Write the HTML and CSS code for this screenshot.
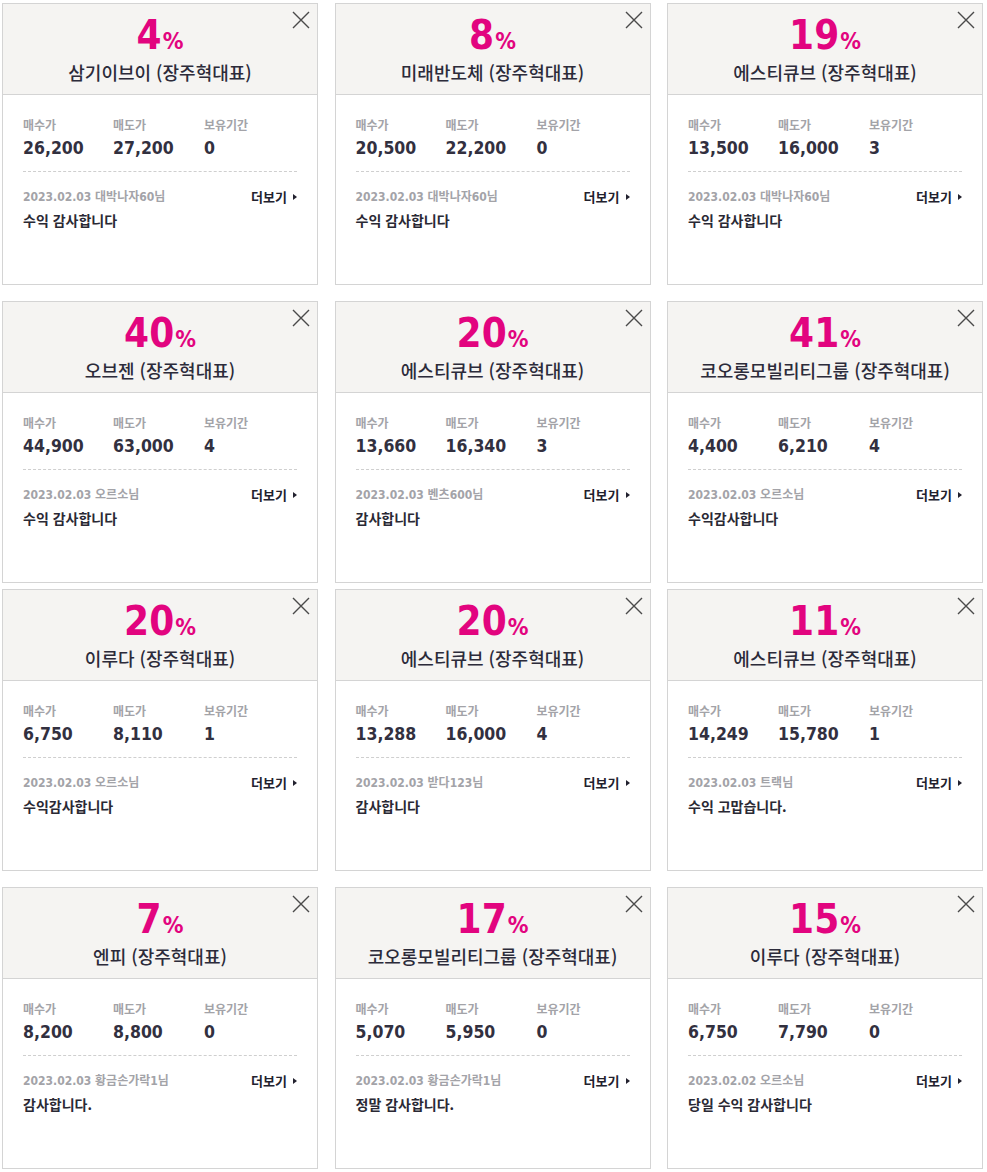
FILE: index.html
```html
<!DOCTYPE html>
<html lang="ko">
<head>
<meta charset="utf-8">
<title>수익 인증</title>
<link rel="stylesheet" href="styles.css">
</head>
<body>
<div class="board">
  <div class="row">
    <div class="card">
      <div class="card-head">
        <div class="rate">4<span class="pct">%</span></div>
        <div class="stock">삼기이브이 (장주혁대표)</div>
        <span class="close" aria-label="닫기"><svg viewBox="0 0 18 18"><path d="M1 1 L17 17 M17 1 L1 17"/></svg></span>
      </div>
      <div class="card-body">
        <div class="stats">
          <div class="stat"><div class="label">매수가</div><div class="value">26,200</div></div>
          <div class="stat"><div class="label">매도가</div><div class="value">27,200</div></div>
          <div class="stat"><div class="label">보유기간</div><div class="value">0</div></div>
        </div>
        <div class="meta"><span class="date">2023.02.03 대박나자60님</span><span class="more">더보기<i class="tri"></i></span></div>
        <div class="comment">수익 감사합니다</div>
      </div>
    </div>
    <div class="card">
      <div class="card-head">
        <div class="rate">8<span class="pct">%</span></div>
        <div class="stock">미래반도체 (장주혁대표)</div>
        <span class="close" aria-label="닫기"><svg viewBox="0 0 18 18"><path d="M1 1 L17 17 M17 1 L1 17"/></svg></span>
      </div>
      <div class="card-body">
        <div class="stats">
          <div class="stat"><div class="label">매수가</div><div class="value">20,500</div></div>
          <div class="stat"><div class="label">매도가</div><div class="value">22,200</div></div>
          <div class="stat"><div class="label">보유기간</div><div class="value">0</div></div>
        </div>
        <div class="meta"><span class="date">2023.02.03 대박나자60님</span><span class="more">더보기<i class="tri"></i></span></div>
        <div class="comment">수익 감사합니다</div>
      </div>
    </div>
    <div class="card">
      <div class="card-head">
        <div class="rate">19<span class="pct">%</span></div>
        <div class="stock">에스티큐브 (장주혁대표)</div>
        <span class="close" aria-label="닫기"><svg viewBox="0 0 18 18"><path d="M1 1 L17 17 M17 1 L1 17"/></svg></span>
      </div>
      <div class="card-body">
        <div class="stats">
          <div class="stat"><div class="label">매수가</div><div class="value">13,500</div></div>
          <div class="stat"><div class="label">매도가</div><div class="value">16,000</div></div>
          <div class="stat"><div class="label">보유기간</div><div class="value">3</div></div>
        </div>
        <div class="meta"><span class="date">2023.02.03 대박나자60님</span><span class="more">더보기<i class="tri"></i></span></div>
        <div class="comment">수익 감사합니다</div>
      </div>
    </div>
  </div>

  <div class="row tight">
    <div class="card">
      <div class="card-head">
        <div class="rate">40<span class="pct">%</span></div>
        <div class="stock">오브젠 (장주혁대표)</div>
        <span class="close" aria-label="닫기"><svg viewBox="0 0 18 18"><path d="M1 1 L17 17 M17 1 L1 17"/></svg></span>
      </div>
      <div class="card-body">
        <div class="stats">
          <div class="stat"><div class="label">매수가</div><div class="value">44,900</div></div>
          <div class="stat"><div class="label">매도가</div><div class="value">63,000</div></div>
          <div class="stat"><div class="label">보유기간</div><div class="value">4</div></div>
        </div>
        <div class="meta"><span class="date">2023.02.03 오르소님</span><span class="more">더보기<i class="tri"></i></span></div>
        <div class="comment">수익 감사합니다</div>
      </div>
    </div>
    <div class="card">
      <div class="card-head">
        <div class="rate">20<span class="pct">%</span></div>
        <div class="stock">에스티큐브 (장주혁대표)</div>
        <span class="close" aria-label="닫기"><svg viewBox="0 0 18 18"><path d="M1 1 L17 17 M17 1 L1 17"/></svg></span>
      </div>
      <div class="card-body">
        <div class="stats">
          <div class="stat"><div class="label">매수가</div><div class="value">13,660</div></div>
          <div class="stat"><div class="label">매도가</div><div class="value">16,340</div></div>
          <div class="stat"><div class="label">보유기간</div><div class="value">3</div></div>
        </div>
        <div class="meta"><span class="date">2023.02.03 벤츠600님</span><span class="more">더보기<i class="tri"></i></span></div>
        <div class="comment">감사합니다</div>
      </div>
    </div>
    <div class="card">
      <div class="card-head">
        <div class="rate">41<span class="pct">%</span></div>
        <div class="stock">코오롱모빌리티그룹 (장주혁대표)</div>
        <span class="close" aria-label="닫기"><svg viewBox="0 0 18 18"><path d="M1 1 L17 17 M17 1 L1 17"/></svg></span>
      </div>
      <div class="card-body">
        <div class="stats">
          <div class="stat"><div class="label">매수가</div><div class="value">4,400</div></div>
          <div class="stat"><div class="label">매도가</div><div class="value">6,210</div></div>
          <div class="stat"><div class="label">보유기간</div><div class="value">4</div></div>
        </div>
        <div class="meta"><span class="date">2023.02.03 오르소님</span><span class="more">더보기<i class="tri"></i></span></div>
        <div class="comment">수익감사합니다</div>
      </div>
    </div>
  </div>

  <div class="row">
    <div class="card">
      <div class="card-head">
        <div class="rate">20<span class="pct">%</span></div>
        <div class="stock">이루다 (장주혁대표)</div>
        <span class="close" aria-label="닫기"><svg viewBox="0 0 18 18"><path d="M1 1 L17 17 M17 1 L1 17"/></svg></span>
      </div>
      <div class="card-body">
        <div class="stats">
          <div class="stat"><div class="label">매수가</div><div class="value">6,750</div></div>
          <div class="stat"><div class="label">매도가</div><div class="value">8,110</div></div>
          <div class="stat"><div class="label">보유기간</div><div class="value">1</div></div>
        </div>
        <div class="meta"><span class="date">2023.02.03 오르소님</span><span class="more">더보기<i class="tri"></i></span></div>
        <div class="comment">수익감사합니다</div>
      </div>
    </div>
    <div class="card">
      <div class="card-head">
        <div class="rate">20<span class="pct">%</span></div>
        <div class="stock">에스티큐브 (장주혁대표)</div>
        <span class="close" aria-label="닫기"><svg viewBox="0 0 18 18"><path d="M1 1 L17 17 M17 1 L1 17"/></svg></span>
      </div>
      <div class="card-body">
        <div class="stats">
          <div class="stat"><div class="label">매수가</div><div class="value">13,288</div></div>
          <div class="stat"><div class="label">매도가</div><div class="value">16,000</div></div>
          <div class="stat"><div class="label">보유기간</div><div class="value">4</div></div>
        </div>
        <div class="meta"><span class="date">2023.02.03 받다123님</span><span class="more">더보기<i class="tri"></i></span></div>
        <div class="comment">감사합니다</div>
      </div>
    </div>
    <div class="card">
      <div class="card-head">
        <div class="rate">11<span class="pct">%</span></div>
        <div class="stock">에스티큐브 (장주혁대표)</div>
        <span class="close" aria-label="닫기"><svg viewBox="0 0 18 18"><path d="M1 1 L17 17 M17 1 L1 17"/></svg></span>
      </div>
      <div class="card-body">
        <div class="stats">
          <div class="stat"><div class="label">매수가</div><div class="value">14,249</div></div>
          <div class="stat"><div class="label">매도가</div><div class="value">15,780</div></div>
          <div class="stat"><div class="label">보유기간</div><div class="value">1</div></div>
        </div>
        <div class="meta"><span class="date">2023.02.03 트랙님</span><span class="more">더보기<i class="tri"></i></span></div>
        <div class="comment">수익 고맙습니다.</div>
      </div>
    </div>
  </div>

  <div class="row">
    <div class="card">
      <div class="card-head">
        <div class="rate">7<span class="pct">%</span></div>
        <div class="stock">엔피 (장주혁대표)</div>
        <span class="close" aria-label="닫기"><svg viewBox="0 0 18 18"><path d="M1 1 L17 17 M17 1 L1 17"/></svg></span>
      </div>
      <div class="card-body">
        <div class="stats">
          <div class="stat"><div class="label">매수가</div><div class="value">8,200</div></div>
          <div class="stat"><div class="label">매도가</div><div class="value">8,800</div></div>
          <div class="stat"><div class="label">보유기간</div><div class="value">0</div></div>
        </div>
        <div class="meta"><span class="date">2023.02.03 황금손가락1님</span><span class="more">더보기<i class="tri"></i></span></div>
        <div class="comment">감사합니다.</div>
      </div>
    </div>
    <div class="card">
      <div class="card-head">
        <div class="rate">17<span class="pct">%</span></div>
        <div class="stock">코오롱모빌리티그룹 (장주혁대표)</div>
        <span class="close" aria-label="닫기"><svg viewBox="0 0 18 18"><path d="M1 1 L17 17 M17 1 L1 17"/></svg></span>
      </div>
      <div class="card-body">
        <div class="stats">
          <div class="stat"><div class="label">매수가</div><div class="value">5,070</div></div>
          <div class="stat"><div class="label">매도가</div><div class="value">5,950</div></div>
          <div class="stat"><div class="label">보유기간</div><div class="value">0</div></div>
        </div>
        <div class="meta"><span class="date">2023.02.03 황금손가락1님</span><span class="more">더보기<i class="tri"></i></span></div>
        <div class="comment">정말 감사합니다.</div>
      </div>
    </div>
    <div class="card">
      <div class="card-head">
        <div class="rate">15<span class="pct">%</span></div>
        <div class="stock">이루다 (장주혁대표)</div>
        <span class="close" aria-label="닫기"><svg viewBox="0 0 18 18"><path d="M1 1 L17 17 M17 1 L1 17"/></svg></span>
      </div>
      <div class="card-body">
        <div class="stats">
          <div class="stat"><div class="label">매수가</div><div class="value">6,750</div></div>
          <div class="stat"><div class="label">매도가</div><div class="value">7,790</div></div>
          <div class="stat"><div class="label">보유기간</div><div class="value">0</div></div>
        </div>
        <div class="meta"><span class="date">2023.02.02 오르소님</span><span class="more">더보기<i class="tri"></i></span></div>
        <div class="comment">당일 수익 감사합니다</div>
      </div>
    </div>
  </div>
</div>
</body>
</html>
```
FILE: styles.css
```css
* { box-sizing: border-box; }

html, body {
  margin: 0;
  padding: 0;
  background: #ffffff;
}

body {
  font-family: "Noto Sans CJK KR", sans-serif;
  color: #333340;
}

.board {
  padding: 3px 0 0 2px;
  width: 985px;
}

.row {
  display: grid;
  grid-template-columns: 316px 316px 316px;
  column-gap: 16.5px;
  margin-bottom: 16px;
}

.row.tight {
  margin-bottom: 6px;
}

.card {
  position: relative;
  height: 282px;
  border: 1px solid #d4d4d4;
  background: #ffffff;
}

.card-head {
  height: 91px;
  background: #f5f4f2;
  border-bottom: 1px solid #d4d4d4;
  padding-top: 12px;
  text-align: center;
}

.rate {
  font-family: "DejaVu Sans Condensed", "DejaVu Sans", sans-serif;
  font-stretch: condensed;
  font-weight: 700;
  font-size: 40px;
  line-height: 38px;
  color: #e2047f;
  letter-spacing: 0;
}

.pct {
  font-size: 23px;
  margin-left: 1px;
}

.stock {
  margin-top: 0;
  font-size: 18px;
  line-height: 24px;
  font-weight: 500;
  color: #2c2b3a;
}

.close {
  position: absolute;
  top: 7px;
  right: 7px;
  width: 18px;
  height: 18px;
  display: block;
}

.close svg {
  display: block;
  width: 18px;
  height: 18px;
}

.close path {
  stroke: #4a4a4a;
  stroke-width: 1.4;
  fill: none;
}

.card-body {
  padding: 22px 20px 0 20px;
}

.stats {
  display: grid;
  grid-template-columns: 90px 91px auto;
  padding-bottom: 12px;
  border-bottom: 1px dashed #cfcfcf;
}

.label {
  font-size: 12px;
  line-height: 16px;
  font-weight: 700;
  color: #a3a3a8;
}

.value {
  margin-top: 4px;
  font-family: "DejaVu Sans Condensed", "DejaVu Sans", sans-serif;
  font-stretch: condensed;
  font-weight: 700;
  font-size: 17.5px;
  line-height: 22px;
  color: #32303f;
}

.meta {
  display: flex;
  justify-content: space-between;
  align-items: center;
  margin-top: 17px;
  line-height: 16px;
}

.date {
  font-family: "DejaVu Sans Condensed", "DejaVu Sans", "Noto Sans CJK KR", sans-serif;
  font-stretch: condensed;
  font-size: 12px;
  font-weight: 700;
  color: #a3a3a8;
}

.more {
  display: flex;
  align-items: center;
  font-size: 13px;
  font-weight: 700;
  color: #22212e;
}

.tri {
  display: block;
  width: 0;
  height: 0;
  margin-left: 6px;
  border-top: 3.5px solid transparent;
  border-bottom: 3.5px solid transparent;
  border-left: 4.5px solid #22212e;
}

.comment {
  margin-top: 5px;
  font-size: 14px;
  line-height: 20px;
  font-weight: 700;
  color: #2a2934;
}
```
